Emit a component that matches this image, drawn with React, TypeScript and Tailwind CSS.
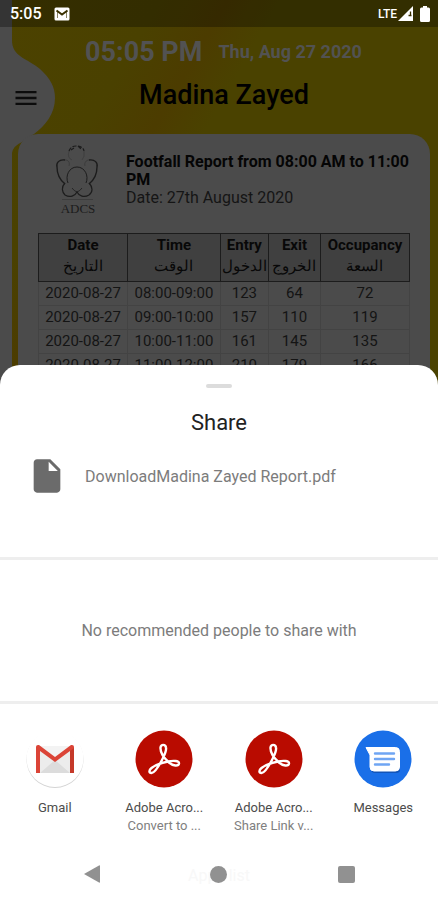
import React from 'react'
import { MdInsertDriveFile, MdMenu } from 'react-icons/md'

const columns = [
  { en: 'Date', ar: 'التاريخ', width: 'w-[24%]' },
  { en: 'Time', ar: 'الوقت', width: 'w-[25%]' },
  { en: 'Entry', ar: 'الدخول', width: 'w-[13%]' },
  { en: 'Exit', ar: 'الخروج', width: 'w-[14%]' },
  { en: 'Occupancy', ar: 'السعة', width: 'w-[24%]' },
]

const rows = [
  ['2020-08-27', '08:00-09:00', '123', '64', '72'],
  ['2020-08-27', '09:00-10:00', '157', '110', '119'],
  ['2020-08-27', '10:00-11:00', '161', '145', '135'],
  ['2020-08-27', '11:00-12:00', '210', '179', '166'],
]

const StatusBar: React.FC = () => (
  <div className="flex h-[27px] items-center justify-between bg-black/30 pl-[10px] pr-2 text-white">
    <div className="flex items-center gap-3">
      <span className="text-base font-medium">5:05</span>
      <svg width="16" height="14" viewBox="0 0 16 14" aria-hidden="true">
        <rect x="0.5" y="0.5" width="15" height="13" rx="1.5" fill="#fff" />
        <path d="M2.500 3.500 8 7.500l5.500-4" fill="none" stroke="#3a3000" strokeWidth="2" />
        <path d="M3.500 5v6M12.500 5v6" stroke="#3a3000" strokeWidth="0.600" />
      </svg>
    </div>
    <div className="flex items-center">
      <span className="text-xs font-medium">LTE</span>
      <svg className="ml-px" width="16" height="15" viewBox="0 0 16 15" aria-hidden="true">
        <path d="M0 15 15 0v15z" fill="#fff" />
        <path d="M12.5 5.5v4M10.5 9.5h3" stroke="#3a3000" strokeWidth="1.3" />
      </svg>
      <svg className="ml-1.5" width="10" height="16" viewBox="0 0 10 16" aria-hidden="true">
        <path d="M3 0h4v1.5h1.5Q10 1.500 10 3v11.500q0 1.500-1.500 1.500h-7Q0 16 0 14.500V3q0-1.500 1.500-1.500H3z" fill="#fff" />
      </svg>
    </div>
  </div>
)

const AdcsLogo: React.FC = () => (
  <div className="flex w-[46px] flex-col items-center">
    <svg width="46" height="56" viewBox="0 0 46 56" fill="none" stroke="#1c1c1c" aria-hidden="true">
      <path d="M14 6q2-5 7-5 7 0 8 5M16 5l3-2M23 1l3 3" strokeWidth="1.200" strokeDasharray="4 1.500" />
      <path d="M14 6q-2 7 3 9M29 6q1 6-2 9" strokeWidth="0.500" opacity="0.5" />
      <path d="M10 15C4 14 1 18 2 22c0 8 3 13 8 17M34 15c6-1 9 3 8 7 0 8-3 13-8 17" strokeWidth="1.400" />
      <path d="M10 15c4 0 5 3 4 6M34 15c-3 0-5 3-4 6" strokeWidth="0.500" opacity="0.6" />
      <path d="M13 38c-3-7 1-16 9-16s12 9 9 16" strokeWidth="1" />
      <path d="M10 38c-4 4-3 9 0 12 5 3 10 1 12-3 2 4 7 6 12 3 4-3 4-8 0-12" strokeWidth="1.200" />
      <path d="M17 43q2 3 5 4 3-1 5-4" strokeWidth="0.800" />
      <path d="M7 54.500h31" strokeWidth="0.500" opacity="0.6" />
    </svg>
    <span className="font-['Liberation_Serif',serif] text-[13px] leading-[16px] text-[#1c1c1c]">ADCS</span>
  </div>
)

const ReportPage: React.FC = () => (
  <div className="relative col-start-1 row-start-1 h-[400px] overflow-hidden bg-[linear-gradient(120deg,#4c4200_0%,#4a4100_24%,#4c3c00_34%,#4a4200_42%,#4a4200_100%)]">
    <svg className="absolute left-0 top-0" width="56" height="400" viewBox="0 0 56 400" aria-hidden="true">
      <path d="M0 0H12V40C12 57 27 58 40 69C50 78 55 87 55 98C55 114 45 126 34 134L22 142Q13 146 12 153V400H0z" fill="#4b4b4b" />
    </svg>
    <div className="relative">
      <StatusBar />
      <header className="relative h-[107px] pt-[9px]">
        <div className="flex items-center justify-center gap-4 pl-[9px] font-bold text-[#525252]">
          <span className="text-[27px] leading-8">05:05 PM</span>
          <span className="text-lg leading-8">Thu, Aug 27 2020</span>
        </div>
        <button type="button" aria-label="Menu" className="absolute left-3 top-[57px] text-[#0c0c0c]">
          <MdMenu size={28} />
        </button>
        <h1 className="mt-[11px] pl-[10px] text-center text-[27px] leading-8 font-medium text-black">Madina Zayed</h1>
      </header>
      <section className="ml-[18px] mr-2 h-[300px] rounded-t-[20px] bg-[#4b4b4b] px-5 pt-[11px]">
        <div className="flex h-[88px] gap-[25px] pl-[17px]">
          <AdcsLogo />
          <div className="flex-1 pt-2 text-base leading-[18px] text-[#151515]">
            <h2 className="font-bold text-[#050505]">Footfall Report from 08:00 AM to 11:00 PM</h2>
            <p>Date: 27th August 2020</p>
          </div>
        </div>
        <table className="w-full table-fixed border-collapse text-center text-[15px] text-[#141414]">
          <thead>
            <tr className="h-[48px] bg-[#404040]">
              {columns.map((col) => (
                <th key={col.en} className={`${col.width} border border-[#1c1c1c] p-0 pb-1 align-middle text-[15px] leading-[21px] font-bold text-[#080808]`}>
                  {col.en}
                  <span className="block font-normal" lang="ar" dir="rtl">{col.ar}</span>
                </th>
              ))}
            </tr>
          </thead>
          <tbody>
            {rows.map((row) => (
              <tr key={row[1]}>
                {row.map((cell, i) => (
                  <td key={i} className="border border-[#434343] p-0 leading-[23px]">{cell}</td>
                ))}
              </tr>
            ))}
          </tbody>
        </table>
      </section>
    </div>
  </div>
)

const GmailIcon: React.FC = () => (
  <svg width="58" height="58" viewBox="0 0 58 58" aria-hidden="true">
    <circle cx="29" cy="29.500" r="28.500" fill="#d4d4d4" />
    <circle cx="29" cy="28.500" r="28.500" fill="#fff" />
    <path d="M10 16h38v27H10z" fill="#ececec" />
    <path d="M14 43 29 30 44 43z" fill="#dcdcdc" />
    <path d="M10 16h38L29 30z" fill="#f3f3f3" />
    <path d="M10 43V17q0-2 2-2h1l16 12 16-12h1q2 0 2 2v26h-4V21L29 32 14 21v22z" fill="#db4437" />
    <path d="M44 21l4-3v25h-4z" fill="#c53929" />
  </svg>
)

const AcrobatIcon: React.FC = () => (
  <svg width="58" height="58" viewBox="0 0 58 58" aria-hidden="true">
    <circle cx="29" cy="29" r="28.500" fill="#b90b00" />
    <path
      d="M28 28C30 24 31.500 20 31 17.500C30.500 14 26 14 25.500 17.500C25.200 22 29 28 34 32.500C38 36 43.500 36.500 44 33.500C44.400 30.500 38 30.500 33 31.500C27 32.700 20 35 16.500 38C13.500 40.500 14 43 16.500 43C20 43 25 34 28 28Z"
      fill="none"
      stroke="#fff"
      strokeWidth="2.400"
      strokeLinejoin="round"
    />
  </svg>
)

const MessagesIcon: React.FC = () => (
  <svg width="58" height="58" viewBox="0 0 58 58" aria-hidden="true">
    <circle cx="29" cy="29" r="28.500" fill="#1a6fe8" />
    <path d="M14 20h28q4 0 4 4v16q0 3-4 3H21q-4 0-4-4V25z" fill="#1254b8" />
    <path d="M12 17.500h29.500q4 0 4 4V37q0 4-4 4H20q-4 0-4-4V25z" fill="#fff" stroke="#fff" strokeLinejoin="round" />
    <path d="M21 23.500h19M21 29h19M21 34.500h14" stroke="#6fa5f3" strokeWidth="2.400" strokeLinecap="round" />
  </svg>
)

const targets = [
  { name: 'Gmail', detail: '', icon: <GmailIcon /> },
  { name: 'Adobe Acro...', detail: 'Convert to ...', icon: <AcrobatIcon /> },
  { name: 'Adobe Acro...', detail: 'Share Link v...', icon: <AcrobatIcon /> },
  { name: 'Messages', detail: '', icon: <MessagesIcon /> },
]

const NavigationBar: React.FC = () => (
  <nav className="grid h-[52px] grid-cols-3 items-center px-7">
    <button type="button" aria-label="Back" className="justify-self-center">
      <svg width="16" height="18" viewBox="0 0 16 18" fill="#919191"><path d="M0 9 15 .5Q16 0 16 1v16q0 1-1 .5z" /></svg>
    </button>
    <div className="grid place-items-center">
      <span className="col-start-1 row-start-1 pt-1 text-base text-[#f8f8f8]">Apps list</span>
      <button type="button" aria-label="Home" className="col-start-1 row-start-1 size-[17px] rounded-full bg-[#919191]" />
    </div>
    <button type="button" aria-label="Recent apps" className="size-[17px] justify-self-center rounded-xs bg-[#919191]" />
  </nav>
)

const ShareSheet: React.FC = () => (
  <section className="relative col-start-1 row-start-1 self-end rounded-t-[20px] bg-white" aria-label="Share">
    <div className="flex flex-col items-center pt-[19px]">
      <span className="h-1 w-[26px] rounded-sm bg-[#dcdcdc]" />
      <h2 className="mt-[19px] text-[22px] leading-8 text-[#222]">Share</h2>
    </div>
    <div className="flex h-[121px] items-start gap-[18px] border-b-[3px] border-[#eee] pt-[17px] pl-[27px]">
      <MdInsertDriveFile size={40} className="text-[#6b6b6b]" />
      <p className="pt-px text-base leading-10 text-[#7c7c7c]">DownloadMadina Zayed Report.pdf</p>
    </div>
    <p className="flex h-[144px] items-center justify-center border-b-[3px] border-[#eee] text-base text-[#7c7c7c]">
      No recommended people to share with
    </p>
    <div className="grid h-[144px] grid-cols-4 pt-[26px]">
      {targets.map((target, i) => (
        <button key={i} type="button" className="flex flex-col items-center text-[13px] leading-[18px]">
          {target.icon}
          <span className="mt-[11px] text-[#4c4c4c]">{target.name}</span>
          <span className="text-[#808080]">{target.detail}</span>
        </button>
      ))}
    </div>
    <NavigationBar />
  </section>
)

export default function App() {
  return (
    <main className="grid min-h-screen bg-[#4b4b4b] font-['Roboto','Noto_Sans',sans-serif]">
      <ReportPage />
      <ShareSheet />
    </main>
  )
}
